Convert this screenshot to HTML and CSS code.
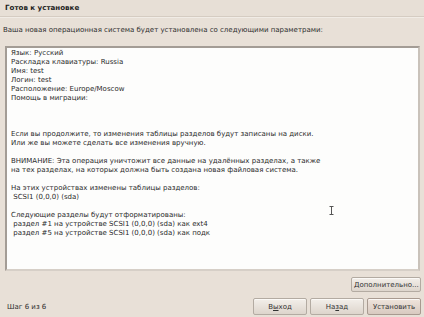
FILE: index.html
```html
<!DOCTYPE html>
<html>
<head>
<meta charset="utf-8">
<link rel="stylesheet" href="styles.css">
</head>
<body>
<div class="window">
  <div class="title">Готов к установке</div>
  <div class="intro">Ваша новая операционная система будет установлена со следующими параметрами:</div>
  <div class="box">
    <div class="text">Язык: Русский
Раскладка клавиатуры: Russia
Имя: test
Логин: test
Расположение: Europe/Moscow
Помощь в миграции:



Если вы продолжите, то изменения таблицы разделов будут записаны на диски.
Или же вы можете сделать все изменения вручную.

ВНИМАНИЕ: Эта операция уничтожит все данные на удалённых разделах, а также
на тех разделах, на которых должна быть создана новая файловая система.

На этих устройствах изменены таблицы разделов:
 SCSI1 (0,0,0) (sda)

Следующие разделы будут отформатированы:
 раздел #1 на устройстве SCSI1 (0,0,0) (sda) как ext4
 раздел #5 на устройстве SCSI1 (0,0,0) (sda) как подк</div>
    <svg class="ibeam" width="5" height="9" viewBox="0 0 5 9"><path d="M0.5 0.5h4M2.5 0.5v8M0.5 8.5h4" stroke="#555" stroke-width="1" fill="none"/></svg>
  </div>
  <div class="more-row"><button class="btn more">Дополнительно...</button></div>
  <div class="footer">
    <span class="step">Шаг 6 из 6</span>
    <div class="buttons">
      <button class="btn">В<u>ы</u>ход</button>
      <button class="btn">На<u>з</u>ад</button>
      <button class="btn default">Установить</button>
    </div>
  </div>
</div>
</body>
</html>
```
FILE: styles.css
```css
html, body {
  margin: 0;
  padding: 0;
}
body {
  width: 424px;
  height: 317px;
  background: #e8e0d7;
  font-family: "DejaVu Sans", sans-serif;
  color: #2e2e2e;
  overflow: hidden;
}
.window {
  display: flex;
  flex-direction: column;
  height: 317px;
}
.title {
  height: 16px;
  line-height: 16px;
  padding-left: 5px;
  font-weight: bold;
  font-size: 7.1px;
  color: #1e1e1e;
  background: #e7dfd6;
  border-bottom: 1px solid #d5ccc2;
  box-shadow: 0 1px 0 #f1ece6;
}
.intro {
  margin-top: 9px;
  padding-left: 3px;
  font-size: 7px;
  line-height: 9px;
}
.box {
  position: relative;
  margin: 11px 4px 0 5px;
  height: 221px;
  background: #fdfdfc;
  border: 2px solid #a39c95;
  border-right-color: #c9c2ba;
  border-bottom-color: #d6cfc7;
}
.text {
  white-space: pre;
  font-size: 7px;
  line-height: 9px;
  padding: 1px 0 0 4px;
  color: #2a2a2a;
}
.ibeam {
  position: absolute;
  left: 322px;
  top: 158px;
}
.more-row {
  display: flex;
  justify-content: flex-end;
  margin-top: 6px;
  padding-right: 3px;
}
.btn {
  font-family: "DejaVu Sans", sans-serif;
  font-size: 7px;
  color: #333;
  height: 15px;
  padding: 0 2px;
  border: 1px solid #b3aba2;
  border-radius: 2px;
  background: linear-gradient(#f3efea, #ddd5cc);
  box-shadow: inset 0 1px 0 #fbf9f6;
}
.btn u {
  text-decoration: underline;
}
.more {
  width: 70px;
}
.footer {
  display: flex;
  align-items: center;
  justify-content: space-between;
  margin-top: 6px;
  padding: 0 3px 0 7px;
}
.step {
  font-size: 7px;
}
.buttons {
  display: flex;
  gap: 3px;
}
.buttons .btn {
  width: 54px;
  height: 17px;
}
.buttons .default {
  background: linear-gradient(#efe4dc, #d8cac0);
  border-color: #a89a90;
}
```
